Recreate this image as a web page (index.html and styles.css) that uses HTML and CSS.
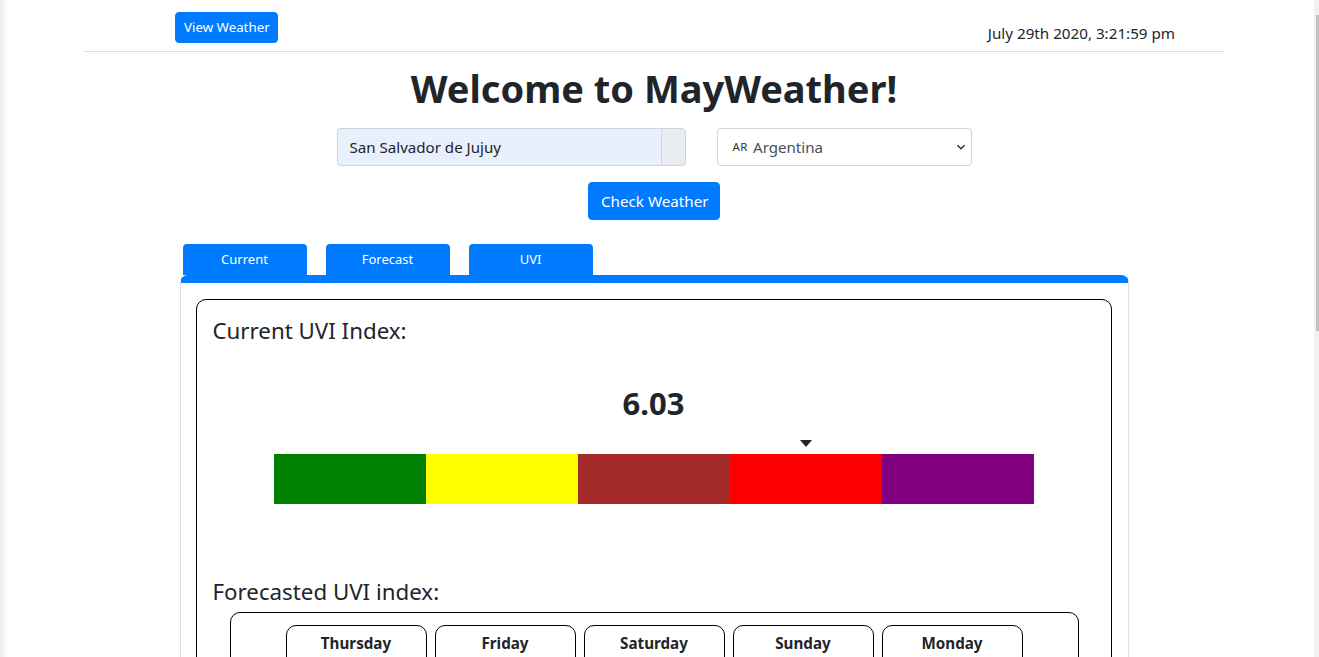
FILE: index.html
```html
<!DOCTYPE html>
<html lang="en">
<head>
<meta charset="utf-8">
<title>MayWeather</title>
<link rel="stylesheet" href="styles.css">
</head>
<body>
<div class="page">
  <header class="container">
    <nav class="topnav">
      <button class="btn btn-sm">View Weather</button>
      <span class="clock">July 29th 2020, 3:21:59 pm</span>
    </nav>
  </header>

  <main class="container main">
    <h1 class="title">Welcome to MayWeather!</h1>

    <form class="search">
      <div class="input-group">
        <div class="input">San Salvador de Jujuy</div>
        <div class="input-append"></div>
      </div>
      <div class="select">
        <span class="flag">AR</span><span class="select-text">Argentina</span>
        <svg class="chev" width="10" height="10" viewBox="0 0 10 10"><path d="M1.5 3.2 L5 6.7 L8.5 3.2" fill="none" stroke="#333" stroke-width="1.6"/></svg>
      </div>
    </form>

    <div class="check-row">
      <button class="btn btn-lg" type="button">Check Weather</button>
    </div>

    <section class="tabs-wrap">
      <div class="tabs">
        <button class="tab">Current</button>
        <button class="tab">Forecast</button>
        <button class="tab">UVI</button>
      </div>
      <div class="panel">
        <div class="uvi-box">
          <h4 class="sub">Current UVI Index:</h4>
          <div class="uvi-value">6.03</div>
          <div class="gauge">
            <div class="marker-row"><span class="marker" style="left: calc(70% - 6px)"></span></div>
            <div class="scale">
              <span class="seg low"></span>
              <span class="seg moderate"></span>
              <span class="seg high"></span>
              <span class="seg veryhigh"></span>
              <span class="seg extreme"></span>
            </div>
          </div>
          <h4 class="sub forecast-title">Forecasted UVI index:</h4>
          <div class="forecast-box">
            <div class="day">Thursday</div>
            <div class="day">Friday</div>
            <div class="day">Saturday</div>
            <div class="day">Sunday</div>
            <div class="day">Monday</div>
          </div>
        </div>
      </div>
    </section>
  </main>
</div>
<div class="edge-shadow"></div>
<div class="scrollbar"><div class="thumb"></div></div>
</body>
</html>
```

FILE: styles.css
```css
* { box-sizing: border-box; }
html, body { margin: 0; padding: 0; height: 100%; overflow: hidden; background: #fff; }
body {
  font-family: "Noto Sans", "Open Sans", sans-serif;
  color: #212529;
  font-size: 15px;
  line-height: 1.5;
}
.page { width: 1308px; }
.container { width: 1140px; margin: 0 auto; }

.topnav {
  height: 52px;
  display: flex;
  justify-content: space-between;
  align-items: flex-start;
  padding: 12px 49px 0 91px;
  border-bottom: 1px solid #dedede;
}
.btn {
  font-family: inherit;
  background: #007bff;
  color: #fff;
  border: 1px solid #007bff;
  border-radius: 4px;
  cursor: pointer;
  white-space: nowrap;
}
.btn-sm { font-size: 13.3px; line-height: 21px; padding: 4px 8px; height: 31px; width: 103px; }
.btn-lg { font-size: 15.2px; line-height: 24px; padding: 6px 12px; height: 38px; width: 132px; }
.clock { font-size: 15.2px; line-height: 24px; margin-top: 9px; }

.main { display: flex; flex-direction: column; align-items: center; }
.title {
  font-size: 38px;
  font-weight: 700;
  line-height: 48px;
  margin: 12px 0 0;
}
.search { display: flex; gap: 31px; margin-top: 16px; }
.input-group { display: flex; width: 349px; height: 38px; }
.input {
  flex: 1;
  background: #e8f0fe;
  border: 1px solid #ced4da;
  border-right: 0;
  border-radius: 4px 0 0 4px;
  padding: 6px 12px;
  font-size: 15.1px;
  line-height: 24px;
}
.input-append {
  width: 25px;
  background: #e9ecef;
  border: 1px solid #ced4da;
  border-radius: 0 4px 4px 0;
}
.select {
  width: 255px;
  height: 38px;
  border: 1px solid #ced4da;
  border-radius: 4px;
  display: flex;
  align-items: center;
  padding: 0 5px 0 15px;
  color: #495057;
}
.flag { font-size: 11.5px; letter-spacing: 0.5px; margin-right: 5px; color: #333; }
.select-text { flex: 1; font-size: 15.1px; }
.chev { display: block; }

.check-row { margin-top: 16px; display: flex; }

.tabs-wrap { width: 949px; margin-top: 24px; }
.tabs { display: flex; gap: 19px; padding-left: 3px; }
.tab {
  width: 124px;
  height: 31px;
  background: #007bff;
  color: #fff;
  border: 0;
  border-radius: 4px 4px 0 0;
  font-family: inherit;
  font-size: 13px;
  padding: 0 0 1px;
}
.panel {
  border: 1px solid #dee2e6;
  border-top: 8px solid #007bff;
  border-radius: 8px 8px 0 0;
  padding: 16px 16px 16px 15px;
  height: 600px;
}
.uvi-box {
  border: 1px solid #000;
  border-radius: 10px;
  padding: 16px;
  height: 900px;
}
.sub {
  font-size: 22.3px;
  font-weight: 400;
  line-height: 29px;
  margin: 0;
}
.uvi-value {
  text-align: center;
  font-size: 31px;
  font-weight: 700;
  line-height: 38px;
  margin-top: 39px;
}
.gauge { width: 760px; margin: 0 auto; }
.marker-row { position: relative; height: 32px; }
.marker {
  position: absolute;
  top: 18px;
  width: 0; height: 0;
  border-left: 6px solid transparent;
  border-right: 6px solid transparent;
  border-top: 7px solid #212529;
}
.scale { display: flex; height: 50px; }
.seg { flex: 1; }
.low { background: #008000; }
.moderate { background: #ffff00; }
.high { background: #a52a2a; }
.veryhigh { background: #ff0000; }
.extreme { background: #800080; }

.forecast-title { margin-top: 73px; }
.forecast-box {
  margin: 6px 16px 0 17px;
  border: 1px solid #000;
  border-radius: 10px;
  padding: 12px 0;
  display: flex;
  justify-content: center;
  gap: 8px;
  height: 400px;
}
.day {
  width: 141px;
  height: 200px;
  border: 1px solid #000;
  border-radius: 10px;
  text-align: center;
  font-weight: 700;
  font-size: 15.2px;
  line-height: 24px;
  padding-top: 5px;
}

.edge-shadow {
  position: fixed; left: 0; top: 0; bottom: 0; width: 9px;
  background: linear-gradient(to right, #ececec, rgba(255,255,255,0));
}
.scrollbar {
  position: fixed; top: 0; bottom: 0; right: 0; width: 5px;
  background: #f1f1f1;
}
.thumb {
  position: absolute; left: 2px; right: 0; top: 15px; height: 316px;
  background: #c1c1c1;
}
```
